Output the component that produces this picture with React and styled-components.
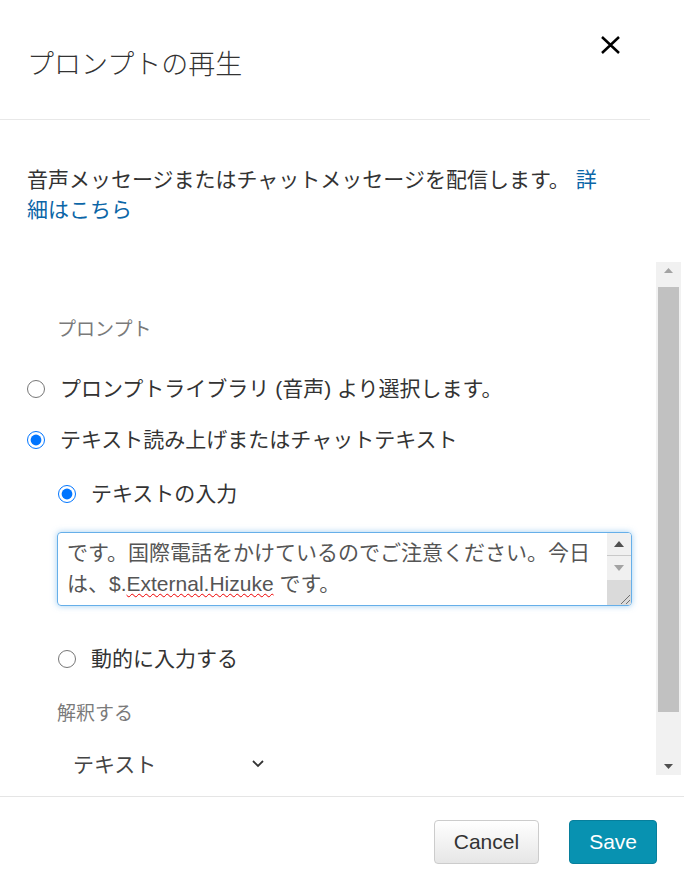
import React from "react";
import styled, { createGlobalStyle } from "styled-components";

const GlobalStyle = createGlobalStyle`
  html, body {
    margin: 0;
    padding: 0;
    background: #fff;
  }
  body {
    font-family: "Liberation Sans", "Noto Sans CJK JP", sans-serif;
    color: #333;
  }
  * {
    box-sizing: border-box;
  }
`;

const Modal = styled.div`
  width: 684px;
  height: 880px;
  display: flex;
  flex-direction: column;
  background: #fff;
`;

const Header = styled.header`
  display: flex;
  justify-content: space-between;
  align-items: flex-start;
  height: 120px;
  margin-right: 34px;
  padding: 35px 29px 0 27px;
  border-bottom: 1px solid #e8e8e8;
`;

const Title = styled.h2`
  margin: 11px 0 0;
  font-size: 27px;
  line-height: 38px;
  font-weight: 300;
  color: #333;
`;

const CloseButton = styled.button`
  width: 21px;
  height: 20px;
  padding: 0;
  border: none;
  background: none;
  cursor: pointer;
  display: flex;
`;

const Description = styled.p`
  margin: 0;
  width: 612px;
  height: 142px;
  padding: 45px 0 0 27px;
  font-size: 21px;
  line-height: 30px;
  color: #333;
`;

const Link = styled.a`
  color: #0b66a7;
  text-decoration: none;
`;

const ScrollArea = styled.div`
  display: flex;
  flex-shrink: 0;
  height: 513px;
  margin-right: 3px;
`;

const Viewport = styled.div`
  flex: 1;
  overflow: hidden;
  padding: 53px 0 0 27px;
`;

const ScrollTrack = styled.div`
  display: flex;
  flex-direction: column;
  width: 25px;
  background: #f1f1f1;
`;

const ArrowButton = styled.div`
  display: flex;
  align-items: center;
  justify-content: center;
  flex-shrink: 0;
  height: ${({ $h }) => $h}px;
  ${({ $line }) => ($line ? "border-bottom: 1px solid #c9c9c9;" : "")}
`;

const ThumbTrack = styled.div`
  flex: 1;
`;

const Thumb = styled.div`
  margin: ${({ $top }) => $top}px 2px 0;
  height: ${({ $h }) => $h}px;
  background: #c1c1c1;
`;

const SectionLabel = styled.div`
  margin: ${({ $top }) => $top}px 0 0 30px;
  font-size: 19px;
  line-height: 30px;
  color: #7a7a7a;
`;

const RadioRow = styled.label`
  display: flex;
  align-items: center;
  gap: 15px;
  height: 30px;
  margin: ${({ $top }) => $top}px 0 0 ${({ $indent }) => $indent || 0}px;
  font-size: 21px;
  line-height: 30px;
  color: #333;
`;

const Radio = styled.input.attrs({ type: "radio" })`
  width: 18px;
  height: 18px;
  margin: 0;
  flex-shrink: 0;
`;

const TextBox = styled.div`
  display: flex;
  width: 575px;
  height: 74px;
  margin: 23px 0 0 30px;
  border: 1px solid #66afe9;
  border-radius: 4px;
  box-shadow: 0 0 6px rgba(102, 175, 233, 0.6);
  overflow: hidden;
`;

const TextContent = styled.div`
  flex: 1;
  overflow: hidden;
  padding: 4px 0 0 9px;
  font-size: 21px;
  line-height: 31px;
  color: #555;
`;

const MiniScrollbar = styled.div`
  display: flex;
  flex-direction: column;
  width: 24px;
  background: #f0f0f0;
`;

const Resizer = styled.div`
  flex-shrink: 0;
  height: 25px;
  margin-top: auto;
  background: #dadada;
  display: flex;
  align-items: flex-end;
  justify-content: flex-end;
`;

const Misspelled = styled.span`
  text-decoration: underline wavy #e00;
  text-decoration-thickness: 1px;
  text-underline-offset: 2px;
`;

const SelectBox = styled.div`
  display: flex;
  align-items: center;
  justify-content: space-between;
  width: 220px;
  height: 40px;
  margin: 14px 0 0 30px;
  padding: 0 12px 0 16px;
  font-size: 21px;
  color: #444;
  cursor: pointer;
`;

const Footer = styled.footer`
  display: flex;
  justify-content: flex-end;
  gap: 30px;
  margin-top: 21px;
  padding: 23px 27px 0;
  border-top: 1px solid #e5e5e5;
`;

const Button = styled.button`
  height: 44px;
  padding: 0 19px;
  border-radius: 4px;
  font-family: "Liberation Sans", sans-serif;
  font-size: 21px;
  cursor: pointer;
  ${({ $primary }) =>
    $primary
      ? `background: #0892b1; border: 1px solid #077f9c; color: #fff;`
      : `background: linear-gradient(#ffffff, #e6e6e6); border: 1px solid #cccccc; color: #333;`}
`;

function CloseIcon() {
  return (
    <svg width="21" height="20" viewBox="0 0 21 20">
      <path d="M2 2 L19 18 M19 2 L2 18" stroke="#000" strokeWidth="2.5" fill="none" />
    </svg>
  );
}

function Chevron() {
  return (
    <svg width="14" height="9" viewBox="0 0 14 9">
      <polyline points="2,2 7,7 12,2" stroke="#333" strokeWidth="1.8" fill="none" />
    </svg>
  );
}

function Arrow({ dir, color, w = 9, h = 5 }) {
  const pts = dir === "up" ? `0,${h} ${w / 2},0 ${w},${h}` : `0,0 ${w / 2},${h} ${w},0`;
  return (
    <svg width={w} height={h} viewBox={`0 0 ${w} ${h}`}>
      <polygon points={pts} fill={color} />
    </svg>
  );
}

function ResizeGrip() {
  return (
    <svg width="14" height="14" viewBox="0 0 14 14">
      <path d="M13 4 L4 13 M13 9 L9 13" stroke="#6f6f6f" strokeWidth="1" fill="none" />
    </svg>
  );
}

export default function App() {
  return (
    <>
      <GlobalStyle />
      <Modal>
        <Header>
          <Title>プロンプトの再生</Title>
          <CloseButton aria-label="閉じる">
            <CloseIcon />
          </CloseButton>
        </Header>

        <Description>
          音声メッセージまたはチャットメッセージを配信します。 <Link href="#">詳細はこちら</Link>
        </Description>

        <ScrollArea>
          <Viewport>
            <SectionLabel $top={0}>プロンプト</SectionLabel>
            <RadioRow $top={29}>
              <Radio name="source" />
              プロンプトライブラリ (音声) より選択します。
            </RadioRow>
            <RadioRow $top={21}>
              <Radio name="source" defaultChecked />
              テキスト読み上げまたはチャットテキスト
            </RadioRow>
            <RadioRow $top={24} $indent={31}>
              <Radio name="input" defaultChecked />
              テキストの入力
            </RadioRow>
            <TextBox>
              <TextContent>
                です。国際電話をかけているのでご注意ください。今日は、$.<Misspelled>External.Hizuke</Misspelled> です。
              </TextContent>
              <MiniScrollbar>
                <ArrowButton $h={23} $line>
                  <Arrow dir="up" color="#505050" w={10} h={6} />
                </ArrowButton>
                <ArrowButton $h={23}>
                  <Arrow dir="down" color="#a3a3a3" w={10} h={6} />
                </ArrowButton>
                <Resizer>
                  <ResizeGrip />
                </Resizer>
              </MiniScrollbar>
            </TextBox>
            <RadioRow $top={38} $indent={31}>
              <Radio name="input" />
              動的に入力する
            </RadioRow>
            <SectionLabel $top={25}>解釈する</SectionLabel>
            <SelectBox>
              テキスト
              <Chevron />
            </SelectBox>
          </Viewport>
          <ScrollTrack>
            <ArrowButton $h={17}>
              <Arrow dir="up" color="#a3a3a3" />
            </ArrowButton>
            <ThumbTrack>
              <Thumb $top={8} $h={425} />
            </ThumbTrack>
            <ArrowButton $h={17}>
              <Arrow dir="down" color="#505050" />
            </ArrowButton>
          </ScrollTrack>
        </ScrollArea>

        <Footer>
          <Button>Cancel</Button>
          <Button $primary>Save</Button>
        </Footer>
      </Modal>
    </>
  );
}
